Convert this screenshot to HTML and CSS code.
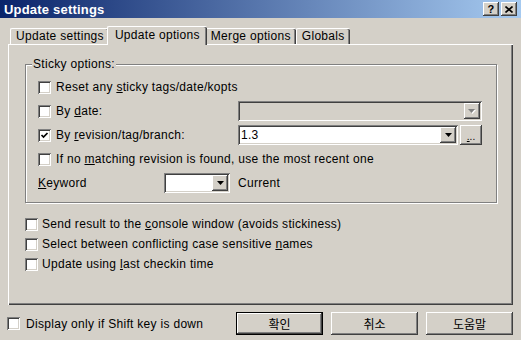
FILE: index.html
```html
<!DOCTYPE html>
<html lang="en">
<head>
  <meta charset="UTF-8" />
  <title>Update settings</title>
  <link rel="stylesheet" href="styles.css">
</head>
<body>
  <div class="titlebar">
    <span class="title">Update settings</span>
    <div class="caption-btns">
      <span class="cbtn help">?</span>
      <span class="cbtn">
        <svg width="8" height="7" viewBox="0 0 8 7"><path d="M0.5 0.5 L7.5 6.5 M7.5 0.5 L0.5 6.5" stroke="#000" stroke-width="1.6"/></svg>
      </span>
    </div>
  </div>

  <div class="dialog">
    <!-- Tabs -->
    <div class="tabs">
      <div class="tab">Update settings</div>
      <div class="tab active">Update options</div>
      <div class="tab">Merge options</div>
      <div class="tab">Globals</div>
    </div>

    <div class="panel">
      <!-- Sticky options group -->
      <div class="group">
        <div class="legend">Sticky options:</div>
        <div class="row">
          <label class="check"><span class="box"></span><span>Reset any <u>s</u>ticky tags/date/kopts</span></label>
        </div>
        <div class="row field">
          <label class="check"><span class="box"></span><span>By <u>d</u>ate:</span></label>
          <div class="combo disabled wide">
            <span class="value"></span>
            <span class="drop"><svg width="8" height="5" viewBox="0 0 8 5"><path d="M1 1 H8 L4.5 5 Z" fill="#fff"/><path d="M0 0 H7 L3.5 4 Z" fill="#808080"/></svg></span>
          </div>
        </div>
        <div class="row field">
          <label class="check"><span class="box checked"><svg width="9" height="9" viewBox="0 0 9 9"><path d="M1.5 4 L3.5 6 L7.5 2" stroke="#000" stroke-width="1.7" fill="none"/></svg></span><span>By <u>r</u>evision/tag/branch:</span></label>
          <div class="combo-pair">
            <div class="combo rev">
              <span class="value">1.3</span>
              <span class="drop"><svg width="7" height="4" viewBox="0 0 7 4"><path d="M0 0 H7 L3.5 4 Z" fill="#000"/></svg></span>
            </div>
            <span class="btn small"><u>.</u>..</span>
          </div>
        </div>
        <div class="row">
          <label class="check"><span class="box"></span><span>If no <u>m</u>atching revision is found, use the most recent one</span></label>
        </div>
        <div class="row keyword">
          <span class="kw-label"><u>K</u>eyword</span>
          <div class="combo kw">
            <span class="value"></span>
            <span class="drop"><svg width="7" height="4" viewBox="0 0 7 4"><path d="M0 0 H7 L3.5 4 Z" fill="#000"/></svg></span>
          </div>
          <span>Current</span>
        </div>
      </div>

      <!-- Other options -->
      <div class="opts">
        <label class="check"><span class="box"></span><span>Send result to the <u>c</u>onsole window (avoids stickiness)</span></label>
        <label class="check"><span class="box"></span><span>Select between conflicting case sensitive <u>n</u>ames</span></label>
        <label class="check"><span class="box"></span><span>Update using <u>l</u>ast checkin time</span></label>
      </div>
    </div>

    <!-- Footer -->
    <div class="footer">
      <label class="check"><span class="box"></span><span>Display only if Shift key is down</span></label>
      <div class="buttons">
        <span class="btn default">확인</span>
        <span class="btn">취소</span>
        <span class="btn">도움말</span>
      </div>
    </div>
  </div>
</body>
</html>
```

FILE: styles.css
```css
body {
  margin: 0;
  width: 521px;
  height: 340px;
  overflow: hidden;
  background: #D4D0C8;
  font-family: "Liberation Sans", Arial, "Noto Sans CJK KR", sans-serif;
  font-size: 12px;
  letter-spacing: 0.3px;
  color: #000;
}
u {
  text-decoration: underline;
  text-underline-offset: 1px;
}

/* Title bar */
.titlebar {
  height: 18px;
  display: flex;
  align-items: center;
  justify-content: space-between;
  padding: 0 4px 0 4px;
  background: linear-gradient(to right, #0A246A, #A6CAF0);
}
.title {
  color: #fff;
  font-weight: bold;
  font-size: 13px;
  letter-spacing: 0.2px;
}
.caption-btns {
  display: flex;
  gap: 2px;
}
.cbtn {
  width: 16px;
  height: 14px;
  display: flex;
  align-items: center;
  justify-content: center;
  background: #D4D0C8;
  box-shadow: inset -1px -1px #404040, inset 1px 1px #fff, inset -2px -2px #808080;
  font-weight: bold;
  font-size: 11px;
}

.dialog {
  padding: 0 8px;
}

/* Tabs */
.tabs {
  margin-top: 8px;
  height: 18px;
  display: flex;
  align-items: flex-end;
  padding-left: 2px;
}
.tab {
  height: 16px;
  padding: 0 5px;
  box-sizing: border-box;
  line-height: 15px;
  border-top: 1px solid #fff;
  border-left: 1px solid #fff;
  border-radius: 2px 2px 0 0;
  box-shadow: inset -1px 0 #404040, inset -2px 0 #808080;
}
.tab.active {
  height: 19px;
  margin: 0 -2px -1px -2px;
  padding: 0 7px;
  line-height: 16px;
  background: #D4D0C8;
  position: relative;
  z-index: 1;
}

/* Tab page */
.panel {
  height: 261px;
  box-sizing: border-box;
  padding: 20px 0 0 17px;
  box-shadow: inset 1px 1px #fff, inset -1px -1px #404040, inset -2px -2px #808080;
}
.group {
  width: 472px;
  box-sizing: border-box;
  border: 1px solid #808080;
  box-shadow: inset 1px 1px #fff, 1px 1px #fff;
  padding: 0 14px 7px 12px;
}
.legend {
  width: fit-content;
  height: 14px;
  line-height: 14px;
  margin: -8px 0 4px -6px;
  padding: 0 1px;
  background: #D4D0C8;
}
.row {
  height: 24px;
  display: flex;
  align-items: center;
}
.row.field {
  display: grid;
  grid-template-columns: 200px 244px;
  align-items: center;
}
.keyword .kw-label {
  width: 126px;
}
.keyword .combo {
  margin-right: 8px;
}

/* Checkboxes */
.check {
  display: flex;
  align-items: center;
  gap: 5px;
  white-space: nowrap;
}
.box {
  width: 13px;
  height: 13px;
  flex: none;
  display: flex;
  align-items: center;
  justify-content: center;
  background: #fff;
  box-shadow: inset 1px 1px #808080, inset -1px -1px #fff, inset 2px 2px #404040, inset -2px -2px #D4D0C8;
}

/* Combo boxes */
.combo {
  height: 20px;
  box-sizing: border-box;
  padding: 2px;
  display: flex;
  background: #fff;
  box-shadow: inset 1px 1px #808080, inset -1px -1px #fff, inset 2px 2px #404040, inset -2px -2px #D4D0C8;
}
.combo.disabled {
  background: #D4D0C8;
}
.combo.wide { width: 244px; }
.combo.rev { width: 220px; }
.combo.kw { width: 66px; }
.combo .value {
  flex: 1;
  line-height: 16px;
  padding-left: 1px;
}
.drop {
  width: 16px;
  height: 16px;
  display: flex;
  align-items: center;
  justify-content: center;
  background: #D4D0C8;
  box-shadow: inset -1px -1px #404040, inset 1px 1px #fff, inset -2px -2px #808080;
}
.combo-pair {
  display: flex;
  gap: 2px;
}

/* Buttons */
.btn {
  width: 87px;
  height: 23px;
  display: flex;
  align-items: center;
  justify-content: center;
  box-sizing: border-box;
  background: #D4D0C8;
  box-shadow: inset -1px -1px #404040, inset 1px 1px #fff, inset -2px -2px #808080;
  font-family: "Noto Sans CJK KR", "Liberation Sans", sans-serif;
  font-size: 12px;
  letter-spacing: 0;
}
.btn.small {
  width: 22px;
  height: 20px;
  font-family: "Liberation Sans", sans-serif;
  font-size: 10px;
  padding-top: 2px;
}
.btn.default {
  box-shadow: inset 0 0 0 1px #000, inset -2px -2px #404040, inset 2px 2px #fff, inset -3px -3px #808080;
}

.opts {
  margin-top: 11px;
  display: flex;
  flex-direction: column;
}
.opts .check {
  height: 20px;
  gap: 4px;
}

.footer {
  margin-top: 7px;
  height: 23px;
  display: flex;
  align-items: center;
  justify-content: space-between;
}
.footer .check {
  margin-left: -1px;
  gap: 6px;
}
.buttons {
  display: flex;
  gap: 8px;
}
```
